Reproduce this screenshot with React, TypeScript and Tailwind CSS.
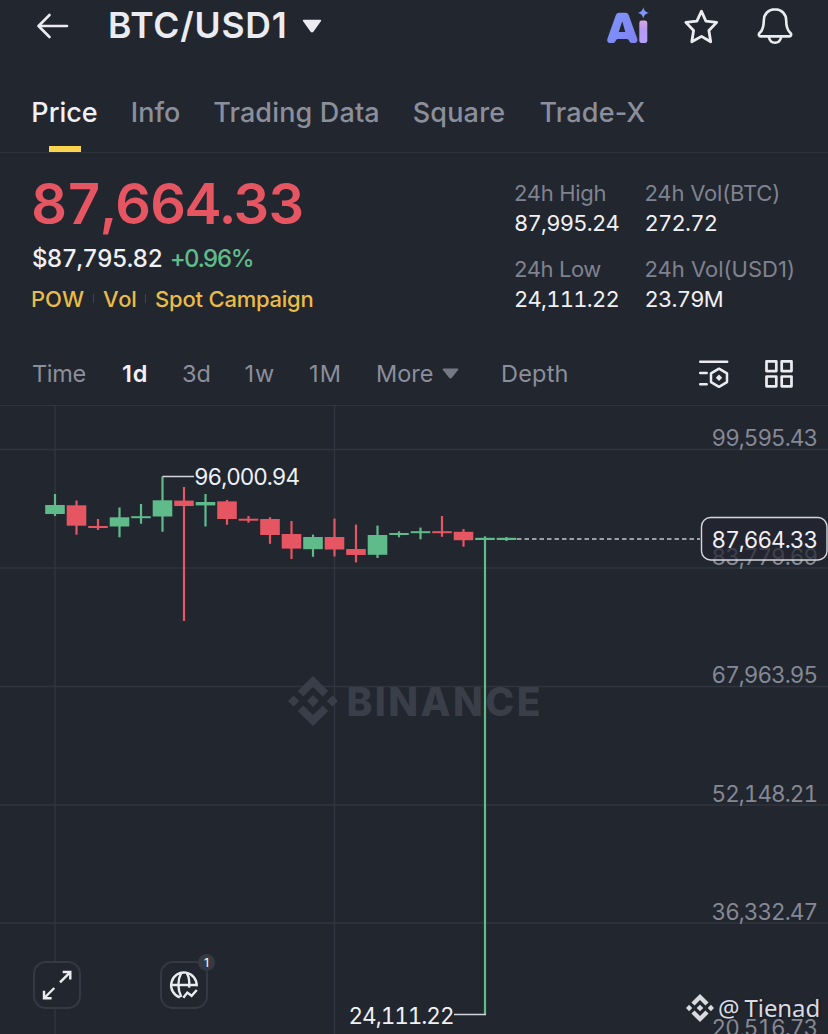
import { useState } from "react";
import type { ReactNode } from "react";

const UP = "#60bb8b";
const DOWN = "#e65562";

const TABS = [
  { label: "Price", className: "w-[65px] mr-[33.5px]" },
  { label: "Info", className: "w-[50px] mr-[33px]" },
  { label: "Trading Data", className: "w-[166px] mr-[33px] tracking-[0.15px]" },
  { label: "Square", className: "w-[93px] mr-[34px] tracking-[0.2px]" },
  { label: "Trade-X", className: "w-[106px] tracking-[0.15px]" },
];

const STATS = [
  { label: "24h High", value: "87,995.24", className: "tracking-[-0.3px]" },
  { label: "24h Vol(BTC)", value: "272.72", className: "tracking-[-0.2px]" },
  { label: "24h Low", value: "24,111.22", className: "tracking-[-0.4px]" },
  { label: "24h Vol(USD1)", value: "23.79M", className: "" },
];

const INTERVALS = [
  { label: "Time", className: "w-[90px] tracking-[-0.3px]" },
  { label: "1d", className: "w-[60px] tracking-[0.8px]" },
  { label: "3d", className: "w-[62.5px]" },
  { label: "1w", className: "w-[64.5px] tracking-[0.9px]" },
  { label: "1M", className: "w-[67px] tracking-[1.2px]" },
];

interface Candle {
  up: boolean;
  high: number;
  top: number;
  bottom: number;
  low: number;
}

// chart y coordinates, one candle per day
const CANDLES: Candle[] = [
  { up: true, high: 494, top: 505, bottom: 514, low: 516 },
  { up: false, high: 500.5, top: 505.3, bottom: 525.7, low: 534.7 },
  { up: false, high: 519, top: 526, bottom: 528, low: 530 },
  { up: true, high: 507.5, top: 517.3, bottom: 526.5, low: 537.3 },
  { up: true, high: 504, top: 516.2, bottom: 518.2, low: 523.7 },
  { up: true, high: 476.5, top: 500.3, bottom: 516.5, low: 531.7 },
  { up: false, high: 487, top: 500.6, bottom: 506, low: 621 },
  { up: true, high: 494, top: 502, bottom: 505.4, low: 526.5 },
  { up: false, high: 500, top: 501.4, bottom: 519, low: 524.8 },
  { up: false, high: 516, top: 518.7, bottom: 520.7, low: 522.7 },
  { up: false, high: 517.2, top: 519, bottom: 535, low: 543.8 },
  { up: false, high: 521, top: 534, bottom: 548.6, low: 559 },
  { up: true, high: 534.6, top: 537, bottom: 549.2, low: 556.8 },
  { up: false, high: 518.6, top: 537, bottom: 549.5, low: 556.5 },
  { up: false, high: 524.6, top: 549, bottom: 555, low: 562.4 },
  { up: true, high: 525.6, top: 535, bottom: 554.8, low: 558 },
  { up: true, high: 531.3, top: 533, bottom: 535, low: 537.3 },
  { up: true, high: 527.6, top: 531.2, bottom: 533.2, low: 539.3 },
  { up: false, high: 516, top: 531.2, bottom: 533.2, low: 536.8 },
  { up: false, high: 529, top: 531.8, bottom: 540.2, low: 546.7 },
  { up: true, high: 536.3, top: 537.8, bottom: 540, low: 1014 },
  { up: true, high: 537, top: 537.8, bottom: 540, low: 541 },
];

const AXIS = [
  { y: 446, label: "99,595.43" },
  { y: 682.5, label: "67,963.95" },
  { y: 801.5, label: "52,148.21" },
  { y: 919.5, label: "36,332.47" },
  { y: 1036, label: "20,516.73" },
];

function BinanceMark({ size, className }: { size: number; className?: string }) {
  return (
    <svg width={size} height={size} viewBox="0 0 50 50" fill="currentColor" className={className}>
      <path d="M15.3 20.6 25 10.9l9.7 9.7 5.6-5.6L25 0 9.7 15z" />
      <path d="M0 25l5.6-5.6L11.2 25l-5.6 5.6zM38.8 25l5.6-5.6L50 25l-5.6 5.6zM19.1 25l5.9-5.9 5.9 5.9-5.9 5.9z" />
      <path d="M15.3 29.4 25 39.1l9.7-9.7 5.6 5.6L25 50 9.7 35z" />
    </svg>
  );
}

function Caret({ width, height, className }: { width: number; height: number; className?: string }) {
  return (
    <svg width={width} height={height} viewBox="0 0 18 13" preserveAspectRatio="none" className={className}>
      <path d="M1.5 1.5h15L9.6 11.4a.8.8 0 0 1-1.2 0z" fill="currentColor" stroke="currentColor" strokeWidth="1.6" strokeLinejoin="round" />
    </svg>
  );
}

function Header() {
  return (
    <header className="flex h-[72px] items-start text-[#eaecf2]">
      <svg width="34" height="28" viewBox="0 0 34 28" fill="none" stroke="currentColor" strokeWidth="2.6" strokeLinecap="round" strokeLinejoin="round" className="ml-[36px] mt-[12px]">
        <path d="M13.5 3 2.5 14l11 11M2.5 14H31" />
      </svg>
      <h1 className="ml-[38px] mt-[4px] w-[184px] whitespace-nowrap text-[35.5px] font-semibold leading-[44px] tracking-[0.8px]">BTC/USD1</h1>
      <Caret width={20} height={14} className="ml-[10px] mt-[19px]" />
      <div className="ml-auto mr-[34px] flex">
        <AiLogo />
        <svg width="38" height="38" viewBox="0 0 38 38" fill="none" stroke="currentColor" strokeWidth="2.8" strokeLinejoin="round" className="ml-[32px] mt-[8px]">
          <path d="M19.5 3.200l4.400 9.900 10.800 1.300-7.800 8.100 1.800 11.300-9.200-5.400-9.700 5.400 1.800-11.300-7.800-8.100 11.100-1.300z" />
        </svg>
        <svg width="38" height="42" viewBox="0 0 38 42" fill="none" stroke="currentColor" strokeWidth="2.6" strokeLinejoin="round" strokeLinecap="round" className="ml-[36px] mt-[5px]">
          <path d="M19 4.300c-6.600 0-11.200 4.700-11.200 11.200 0 6.500-.9 9.500-4 12.300-1.700 1.500-1 3.600 1 3.600h28.400c2 0 2.700-2.100 1-3.600-3.100-2.800-4-5.800-4-12.300C30.200 9 25.600 4.300 19 4.300z" />
          <path d="M12.900 32.500c.9 3.500 3 5.200 6.100 5.200s5.200-1.700 6.100-5.200" />
        </svg>
      </div>
    </header>
  );
}

function AiLogo() {
  return (
    <svg width="44" height="38" viewBox="0 0 44 38" className="mt-[7px]">
      <defs>
        <linearGradient id="ai-a" x1="0" y1="0" x2="1" y2="1">
          <stop offset="0" stopColor="#7f95fa" />
          <stop offset="1" stopColor="#7f83f2" />
        </linearGradient>
        <linearGradient id="ai-i" x1="0" y1="0" x2="0" y2="1">
          <stop offset="0" stopColor="#d8a7dc" />
          <stop offset="0.4" stopColor="#b49af2" />
          <stop offset="1" stopColor="#b6a0fa" />
        </linearGradient>
      </defs>
      {/* rounded monogram with a small counter */}
      <path
        fillRule="evenodd"
        fill="url(#ai-a)"
        d="M13.5 5.800h5.600c2 0 3 .8 3.700 2.500l8.400 23.200c.8 2.400-.3 4.600-3 4.600h-2.600c-2.300 0-2.500-4-4.300-4h-9.800c-1.800 0-1.900 4-4.300 4H4.500c-2.800 0-3.800-2.200-3-4.600L9.800 8.300c.7-1.700 1.700-2.500 3.700-2.500zM16.300 14.300l-3.600 10.700h6.600z"
      />
      <rect x="33.3" y="13.5" width="8" height="22.6" rx="2.4" fill="url(#ai-i)" />
      <path d="M37.3.3c1 3.700 1.800 4.500 5.600 5.600-3.800 1-4.600 1.800-5.600 5.500-1-3.700-1.800-4.500-5.500-5.500C35.500 4.800 36.300 4 37.300.3z" fill="#7f95fa" />
    </svg>
  );
}

function Tabs() {
  const [active, setActive] = useState("Price");
  return (
    <nav className="flex h-[81px] border-b border-[#2e323b] pl-[32px]">
      {TABS.map((t) => (
        <button
          key={t.label}
          onClick={() => setActive(t.label)}
          className={`flex shrink-0 flex-col items-center whitespace-nowrap text-[27px] font-medium leading-[34px] ${t.className} ${active === t.label ? "text-[#f0f1f6]" : "text-[#8b8f9b]"}`}
        >
          <span className="mt-[24px]">{t.label}</span>
          {active === t.label && <span className="mt-[15.5px] h-[6px] w-[32px] bg-[#fbd34e]" />}
        </button>
      ))}
    </nav>
  );
}

function Summary() {
  return (
    <section className="flex h-[189px] pl-[32px]">
      <div className="w-[482px] [font-kerning:none]">
        <div className="-ml-px mt-[18.5px] text-[56px] font-semibold leading-[64px] tracking-[-1.2px] tabular-nums text-[#e65562]">87,664.33</div>
        <div className="mt-[7.5px] flex text-[24px] leading-[32px]">
          <span className="w-[138px] font-medium tracking-[-0.7px] tabular-nums text-[#f0f1f6]">$87,795.82</span>
          <span className="font-medium tracking-[-1.6px] tabular-nums text-[#60bb8b]">+0.96%</span>
        </div>
        <div className="mt-[8.5px] flex items-center text-[22px] font-medium leading-[30px] text-[#e9bd46]">
          <span className="-ml-px w-[62px]">POW</span>
          <span className="h-[9px] w-px bg-[#3f434d]" />
          <span className="ml-[9px] w-[42px] tracking-[-0.3px]">Vol</span>
          <span className="h-[9px] w-px bg-[#3f434d]" />
          <span className="ml-[9px] tracking-[-0.2px]">Spot Campaign</span>
        </div>
      </div>
      <dl className="mt-[26px] grid h-[152px] grid-cols-[130.5px_180px] grid-rows-[76px_76px]">
        {STATS.map((s) => (
          <div key={s.label} className={`whitespace-nowrap text-[22px] leading-[29.5px] ${s.className}`}>
            <dt className="text-[#7f838f]">{s.label}</dt>
            <dd className="tabular-nums tracking-[-0.75px] text-[#f0f1f6] [font-kerning:none]">{s.value}</dd>
          </div>
        ))}
      </dl>
    </section>
  );
}

function IntervalBar() {
  const [active, setActive] = useState("1d");
  return (
    <div className="flex h-[64px] items-center border-b border-[#30343e] pl-[32px] text-[23.5px] text-[#8b8f9b]">
      {INTERVALS.map((i) => (
        <button key={i.label} onClick={() => setActive(i.label)} className={`text-left ${i.className} ${active === i.label ? "font-semibold text-[#f0f1f6]" : ""}`}>
          {i.label}
        </button>
      ))}
      <button className="flex w-[125px] items-center">
        <span className="w-[66px] text-left">More</span>
        <Caret width={17} height={11} className="text-[#747986]" />
      </button>
      <button className="tracking-[0.2px]">Depth</button>
      <div className="ml-auto mr-[34px] flex items-center text-[#eaecf2]">
        <svg width="32" height="30" viewBox="0 0 32 30" fill="none" stroke="currentColor" strokeWidth="2.5" strokeLinecap="round" strokeLinejoin="round" className="mr-[34px]">
          <path d="M2.2 2.700h27M2.200 14h6.500M2.200 25.300h6.500" />
          <path d="M21 9.700l8 4.600v8.800l-8 4.700-8-4.700v-8.800z" />
          <path d="M21 15.400l3.200 3.300-3.200 3.200-3.200-3.200z" fill="currentColor" stroke="none" />
        </svg>
        <svg width="30" height="30" viewBox="0 0 30 30" fill="none" stroke="currentColor" strokeWidth="2.7" strokeLinejoin="round">
          <rect x="2.5" y="2.3" width="9.8" height="9.8" />
          <rect x="17.7" y="2.3" width="9.8" height="9.8" />
          <rect x="2.5" y="17.5" width="9.8" height="9.8" />
          <rect x="17.7" y="17.5" width="9.8" height="9.8" />
        </svg>
      </div>
    </div>
  );
}

function ToolButton({ children, badge, className }: { children: ReactNode; badge?: string; className: string }) {
  return (
    <button className={`absolute flex size-[48px] items-center justify-center rounded-[13px] border-2 border-[#353943] bg-[#22262f] text-[#eaecf2] ${className}`}>
      {children}
      {badge && <span className="absolute -right-[9px] -top-[9px] flex size-[17px] items-center justify-center rounded-full bg-[#353943] text-[12px] font-medium leading-none">{badge}</span>}
    </button>
  );
}

function Chart() {
  return (
    <section className="relative h-[628px] overflow-hidden">
      <svg width="828" height="628" viewBox="0 406 828 628" className="block tabular-nums [font-kerning:none]">
        <g stroke="#30343e" strokeWidth="1.5">
          {[55, 334.5].map((x) => <line key={x} x1={x} x2={x} y1="406" y2="1034" />)}
          {[449.5, 568, 686.5, 805, 923].map((y) => <line key={y} x1="0" x2="828" y1={y} y2={y} />)}
        </g>

        <g className="text-[#3a3e48]">
          <svg x="288" y="676" width="50" height="50"><BinanceMark size={50} /></svg>
          <text x="346.5" y="715.5" fontSize="39" fontWeight="800" fill="currentColor" textLength="194">BINANCE</text>
        </g>

        {CANDLES.map((c, i) => {
          const x = 55 + i * 21.5;
          return (
            <g key={i} fill={c.up ? UP : DOWN}>
              <rect x={x - 1.1} y={c.high} width="2.2" height={c.low - c.high} />
              <rect x={x - 9.8} y={c.top} width="19.6" height={c.bottom - c.top} />
            </g>
          );
        })}

        <path d="M162.5 476.500H194M454 1014.500h32" stroke="#d5d7de" strokeWidth="1.4" fill="none" />
        <text x="194" y="485" fontSize="22.5" fill="#f0f1f6" textLength="106">96,000.94</text>
        <text x="348.5" y="1023.5" fontSize="22.5" fill="#f0f1f6" textLength="106">24,111.22</text>

        <g fontSize="22.5" fill="#858994">
          {AXIS.map((a) => <text key={a.label} x="711.5" y={a.y} textLength="106.5">{a.label}</text>)}
          <text x="711.5" y="564.5" textLength="106.5">83,779.69</text>
        </g>

        {/* last price */}
        <line x1="517" x2="700" y1="539" y2="539" stroke="#c5c8d0" strokeWidth="1.4" strokeDasharray="4.5 3" />
        <rect x="701.5" y="517.5" width="125.5" height="42.5" rx="9" fill="#22262f" fillOpacity="0.72" stroke="#d5d7de" strokeWidth="1.4" />
        <text x="711.5" y="547.5" fontSize="22.5" fill="#f0f1f6" textLength="106.5">87,664.33</text>
      </svg>

      <ToolButton className="left-[33px] top-[555px]">
        <svg width="32" height="32" viewBox="0 0 32 32" fill="none" stroke="currentColor" strokeWidth="2.4" className="shrink-0">
          <path d="M19 13.300 29 3.300M21.700 3h7.600v7.600M13.300 19 3.300 29M3 21.700v7.600h7.600" />
        </svg>
      </ToolButton>
      <ToolButton className="left-[160px] top-[555px]" badge="1">
        <svg width="32" height="32" viewBox="0 0 32 32" fill="none" stroke="currentColor" strokeWidth="2.4" className="shrink-0">
          <path d="M11.800 28.400A12.800 12.800 0 1 1 28.700 17.300M3.300 16h25.400" />
          <path d="M13.300 28C9.400 20.500 9.400 11 13.300 3.800M18.800 3.800c2.200 4 3 8.700 2.300 14.800" />
          <path d="M15.300 28.800l4-5.200 4.300 3.200 5.200-5.800" />
        </svg>
      </ToolButton>

      <div className="absolute left-[686px] top-[585.5px] flex items-center font-['Noto_Sans'] text-[24px] leading-[32px] text-[#d9dbe0] [text-shadow:1px_1px_2px_#15181e]">
        <BinanceMark size={28} />
        <span className="ml-[4px]">@</span>
        <span className="ml-[5px] tracking-[-0.1px]">Tienad</span>
      </div>
    </section>
  );
}

export default function App() {
  return (
    <main className="h-[1034px] w-[828px] overflow-hidden bg-[#22262f] font-[Inter,sans-serif]">
      <Header />
      <Tabs />
      <Summary />
      <IntervalBar />
      <Chart />
    </main>
  );
}
